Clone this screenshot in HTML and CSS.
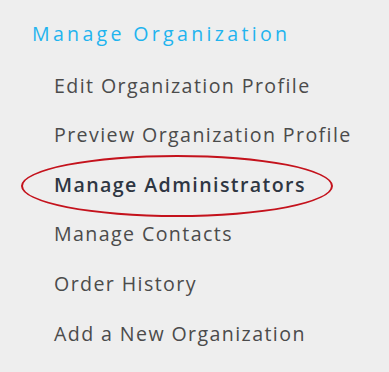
FILE: index.html
```html
<!DOCTYPE html>
<html lang="en">
<head>
<meta charset="utf-8">
<title>Manage Organization</title>
<link rel="stylesheet" href="styles.css">
</head>
<body>
<nav class="sidebar">
  <h2 class="sidebar-title">Manage Organization</h2>
  <ul class="menu">
    <li class="menu-item"><a href="#">Edit Organization Profile</a></li>
    <li class="menu-item"><a href="#">Preview Organization Profile</a></li>
    <li class="menu-item is-active"><a href="#">Manage Administrators</a><span class="highlight-ring"></span></li>
    <li class="menu-item"><a href="#">Manage Contacts</a></li>
    <li class="menu-item"><a href="#">Order History</a></li>
    <li class="menu-item"><a href="#">Add a New Organization</a></li>
  </ul>
</nav>
</body>
</html>
```

FILE: styles.css
```css
html, body {
  margin: 0;
  padding: 0;
  background: #eeeeee;
}

body {
  width: 389px;
  height: 372px;
  overflow: hidden;
  font-family: "Open Sans", "Liberation Sans", sans-serif;
}

.sidebar {
  padding: 19px 0 0 32px;
}

.sidebar-title {
  margin: 0;
  font-size: 19.6px;
  font-weight: 400;
  line-height: 30px;
  letter-spacing: 3.3px;
  color: #1fb4ee;
}

.menu {
  list-style: none;
  margin: 11.6px 0 0;
  padding: 0 0 0 22px;
}

.menu-item {
  position: relative;
  height: 49.6px;
  line-height: 49.6px;
  font-size: 19.6px;
  letter-spacing: 1.4px;
}

.menu-item a {
  color: #4b4b4b;
  text-decoration: none;
}

.menu-item.is-active a {
  color: #2e3642;
  font-weight: 600;
  letter-spacing: 1.4px;
}

.highlight-ring {
  position: absolute;
  left: -33px;
  top: -5px;
  width: 308px;
  height: 58px;
  border: 2px solid #c4121c;
  border-radius: 50%;
  pointer-events: none;
}
```
